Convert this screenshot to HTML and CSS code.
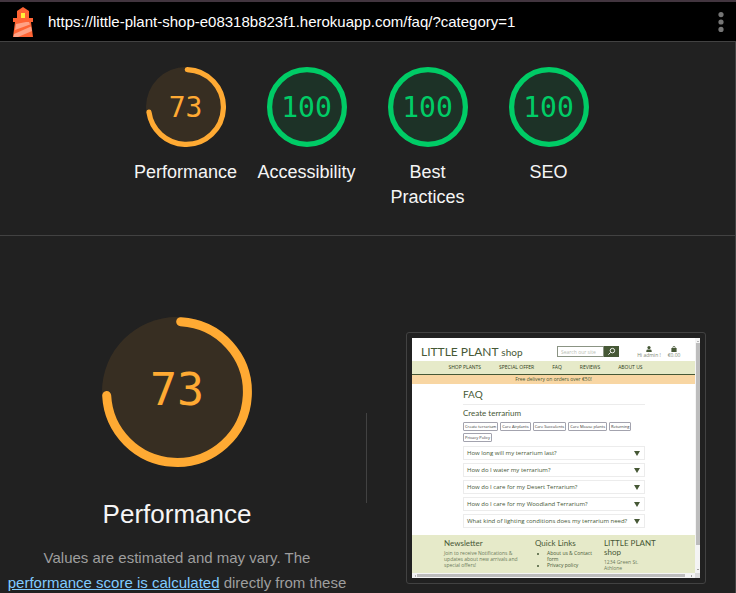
FILE: index.html
```html
<!DOCTYPE html>
<html lang="en">
<head>
<meta charset="utf-8">
<title>Lighthouse report</title>
<link rel="stylesheet" href="styles.css">
</head>
<body>
<header class="topbar">
  <svg class="logo" viewBox="0 0 20 30" aria-hidden="true">
    <path fill="#ff6434" d="M10 0 16 4V11H20V15H18L20 30H0L2 15H0V11H4V4Z"/>
    <path fill="#ffa285" d="M3 17 13 15H16L17 17.500 2 23ZM1 27 18 19.500 19 24 5 30H.5Z"/>
    <path fill="#fff03a" d="M8 6H12V11H8Z"/>
  </svg>
  <a class="url" href="#performance">https://little-plant-shop-e08318b823f1.herokuapp.com/faq/?category=1</a>
  <button class="menu" type="button" aria-label="Tools menu">
    <svg viewBox="0 0 6 20" aria-hidden="true"><circle cx="3" cy="2.6" r="2.6"/><circle cx="3" cy="10" r="2.6"/><circle cx="3" cy="17.4" r="2.6"/></svg>
  </button>
</header>
<main class="report">
  <nav class="scores">
    <a class="score average" href="#performance">
      <span class="gauge"><svg viewBox="0 0 80 80" aria-hidden="true"><circle class="disc" cx="40" cy="40" r="40"/><circle class="arc" cx="40" cy="40" r="37.4" pathLength="360" stroke-dasharray="260 360" transform="rotate(-88 40 40)"/></svg><span class="value">73</span></span>
      <span class="label">Performance</span>
    </a>
    <a class="score pass" href="#accessibility">
      <span class="gauge"><svg viewBox="0 0 80 80" aria-hidden="true"><circle class="disc" cx="40" cy="40" r="40"/><circle class="arc" cx="40" cy="40" r="37.4"/></svg><span class="value">100</span></span>
      <span class="label">Accessibility</span>
    </a>
    <a class="score pass" href="#practices">
      <span class="gauge"><svg viewBox="0 0 80 80" aria-hidden="true"><circle class="disc" cx="40" cy="40" r="40"/><circle class="arc" cx="40" cy="40" r="37.4"/></svg><span class="value">100</span></span>
      <span class="label">Best Practices</span>
    </a>
    <a class="score pass" href="#seo">
      <span class="gauge"><svg viewBox="0 0 80 80" aria-hidden="true"><circle class="disc" cx="40" cy="40" r="40"/><circle class="arc" cx="40" cy="40" r="37.4"/></svg><span class="value">100</span></span>
      <span class="label">SEO</span>
    </a>
  </nav>
  <section class="category" id="performance">
    <div class="summary average">
      <div class="gauge large"><svg viewBox="0 0 150 150" aria-hidden="true"><circle class="disc" cx="75" cy="75" r="75"/><circle class="arc" cx="75" cy="75" r="70.4" pathLength="360" stroke-dasharray="264 360" transform="rotate(-87 75 75)"/></svg><span class="value">73</span></div>
      <h1>Performance</h1>
      <p>Values are estimated and may vary. The <a href="#calc">performance score is calculated</a> directly from these</p>
    </div>
    <div class="divider"></div>
    <div class="frame">
      <div class="shop">
        <div class="page">
          <div class="brandbar">
            <div class="brand">LITTLE PLANT <small>shop</small></div>
            <div class="search">
              <input type="text" placeholder="Search our site" aria-label="Search our site">
              <button type="button" aria-label="Search"><svg viewBox="0 0 10 10" aria-hidden="true"><circle cx="6" cy="4" r="2.5"/><path d="M4 6 1.5 8.5"/></svg></button>
            </div>
            <div class="account"><svg viewBox="0 0 6 6" aria-hidden="true"><circle cx="3" cy="1.6" r="1.6"/><path d="M.3 6V5Q.3 3.6 2 3.6H4Q5.7 3.6 5.7 5V6Z"/></svg>Hi admin !</div>
            <div class="account"><svg viewBox="0 0 6 6" aria-hidden="true"><path d="M.4 2H1.4Q1.6 0 3 0T4.6 2H5.6V6H.4ZM2.1 2H3.9Q3.7.8 3 .8T2.1 2Z"/></svg>€0.00</div>
          </div>
          <div class="shopnav"><a href="#plants">SHOP PLANTS</a><a href="#offer">SPECIAL OFFER</a><a href="#faq">FAQ</a><a href="#reviews">REVIEWS</a><a href="#about">ABOUT US</a></div>
          <div class="banner">Free delivery on orders over €50!</div>
          <div class="faq">
            <h2>FAQ</h2>
            <h3>Create terrarium</h3>
            <div class="tags"><button type="button">Create terrarium</button><button type="button">Care Airplants</button><button type="button">Care Succulents</button><button type="button">Care Mouse plants</button><button type="button">Returning</button><button type="button">Privacy Policy</button></div>
            <div class="questions">
              <div class="question">How long will my terrarium last?<i></i></div>
              <div class="question">How do I water my terrarium?<i></i></div>
              <div class="question">How do I care for my Desert Terrarium?<i></i></div>
              <div class="question">How do I care for my Woodland Terrarium?<i></i></div>
              <div class="question">What kind of lighting conditions does my terrarium need?<i></i></div>
            </div>
          </div>
          <div class="footer">
            <div><h4>Newsletter</h4><p>Join to receive Notifications &amp;<br>updates about new arrivals and<br>special offers!</p></div>
            <div><h4>Quick Links</h4><ul><li>About us &amp; Contact<br>form</li><li>Privacy policy</li></ul></div>
            <div><h4>LITTLE PLANT<br>shop</h4><p>1234 Green St.<br>Athlone</p></div>
          </div>
        </div>
        <div class="vbar"><span class="up"></span><span class="thumb"></span><span class="down"></span></div>
        <div class="hbar"><span class="left"></span><span class="thumb"></span><span class="right"></span></div>
        <div class="corner"></div>
      </div>
    </div>
  </section>
</main>
</body>
</html>
```

FILE: styles.css
```css
* { box-sizing: border-box; }
html { background: #212121; }
body {
  margin: 0;
  height: 100vh;
  overflow: hidden;
  display: flex;
  flex-direction: column;
  font-family: "Liberation Sans", Arial, sans-serif;
  color: #f5f5f5;
}
a { color: inherit; text-decoration: none; }

.topbar {
  flex: none;
  display: flex;
  align-items: center;
  height: 42px;
  padding: 0 12px 0 13px;
  background: #000;
  border-top: 2px solid #42353f;
  border-bottom: 1px solid #424242;
}
.logo { width: 20px; height: 30px; }
.url { flex: 1; margin-left: 15px; font-size: 15px; line-height: 20px; color: #fff; }
.menu { padding: 0; border: 0; background: none; width: 6px; height: 20px; }
.menu svg { display: block; width: 6px; height: 20px; fill: #757575; }

.report { flex: 1; min-height: 0; overflow: hidden; border-right: 1px solid #424242; }
.scores {
  display: flex;
  justify-content: center;
  padding: 25px 1px 25px 0;
  border-bottom: 1px solid #424242;
}
.score {
  width: 121px;
  padding: 0 8px;
  display: flex;
  flex-direction: column;
  align-items: center;
  text-align: center;
}
.label { margin-top: 13px; font-size: 18px; line-height: 25px; min-height: 25px; }
.gauge {
  display: grid;
  place-items: center;
  width: 80px;
  height: 80px;
  font-family: "DejaVu Sans Mono", monospace;
  font-size: 28px;
}
.gauge > * { grid-area: 1 / 1; }
.gauge svg { width: 100%; height: 100%; }
.gauge.large { width: 150px; height: 150px; margin: 0 auto; font-size: 45px; }
.large .value { padding-bottom: 6px; }
.disc { opacity: 0.1; fill: currentColor; }
.arc { fill: none; stroke: currentColor; stroke-width: 5.2; stroke-linecap: round; }
.large .arc { stroke-width: 9; }
.average .gauge { color: #fa3; }
.pass .gauge { color: #0c6; }

.category { display: flex; align-items: center; padding: 81px 29px 0 4px; }
.summary { flex: 1; padding-bottom: 4px; text-align: center; }
h1 { margin: 31px 0 15px; font-size: 26px; font-weight: 400; line-height: 32px; }
.summary p { margin: 0; font-size: 15px; line-height: 25px; color: #9e9e9e; }
.summary p a { color: #80cbff; text-decoration: underline; }
.divider { width: 1px; height: 90px; margin: 0 39px 0 16px; background: #424242; }
.frame { width: 300px; padding: 5px; border: 1px solid #424242; border-radius: 3px; }

.shop {
  display: grid;
  grid-template-columns: 1fr 5px;
  grid-template-rows: 235px 5px;
  background: #fff;
  color: #465836;
  font-family: "Open Sans", sans-serif;
  font-size: 5px;
  line-height: 6px;
}
.page { min-width: 0; overflow: hidden; display: flex; flex-direction: column; }
.brandbar { flex: none; display: flex; align-items: center; height: 23px; padding: 4px 14px 0 9px; }
.brand { flex: 1; font-family: Lato, sans-serif; font-size: 12px; line-height: 16px; white-space: nowrap; }
.brand small { font-size: 10px; }
.search { display: flex; width: 62px; height: 11px; margin-right: 18px; }
.search input { min-width: 0; flex: 1; padding: 0 3px; border: 1px solid #8b9484; font: inherit; }
.search input::placeholder { color: #b9beb4; }
.search button { width: 15px; padding: 0; border: 0; background: #465836; }
.search svg { display: block; width: 9px; height: 9px; margin: 0 auto; fill: none; stroke: #fff; }
.account { display: flex; flex-direction: column; align-items: center; width: 24px; white-space: nowrap; color: #7d8775; }
.account + .account { width: 14px; margin-left: 6px; }
.account svg { width: 6px; height: 6px; fill: #465836; }
.shopnav { flex: none; display: flex; justify-content: center; gap: 18px; height: 14px; padding-right: 16px; line-height: 12px; color: #2c3a20; background: #e6eac9; border-bottom: 1px solid #465836; }
.banner { flex: none; height: 9px; line-height: 9px; text-align: center; background: #f8d6a3; }
.faq { flex: 1; padding: 4px 50px 0 51px; }
h2, h3, h4 { margin: 0; font-family: Lato, sans-serif; font-weight: 400; }
h2 { font-size: 10px; line-height: 12px; padding-bottom: 4px; border-bottom: 1px solid #ececec; }
h3 { margin-top: 3px; font-size: 8px; line-height: 10px; }
.tags { display: flex; flex-wrap: wrap; gap: 2px; margin: 4px 0; }
.tags button { height: 9px; padding: 0 1px; border: 1px solid #a3a3ae; border-radius: 1px; background: #fff; color: #333; font-family: "Open Sans", sans-serif; font-size: 4px; line-height: 6px; }
.questions { display: grid; gap: 3px; font-size: 6px; }
.question { display: flex; align-items: center; justify-content: space-between; height: 14px; padding: 0 4px 0 3px; border: 1px solid #ececec; white-space: nowrap; }
.question i { border: solid transparent; border-width: 5px 3px 0; border-top-color: #465836; }
.footer { flex: none; display: grid; grid-template-columns: 91px 69px 1fr; height: 38px; padding: 4px 0 0 32px; background: #e6eac9; }
.footer h4 { font-size: 8px; line-height: 9px; }
.footer p, .footer ul { margin: 2px 0 0; color: #6b7a5b; line-height: 6px; }
.footer ul { padding-left: 12px; color: #465836; }
.vbar, .hbar { display: flex; background: #f4f4f4; }
.vbar { flex-direction: column; align-items: center; padding: 2px 0; }
.vbar .thumb { flex: 1; width: 4px; margin: 1px 0 24px; background: #bdbdbd; }
.hbar { align-items: center; padding: 0 2px; }
.hbar .thumb { flex: 1; height: 3px; margin: 0 6px 0 1px; background: #bdbdbd; }
.up, .down, .left, .right { width: 2px; height: 2px; border: 1px solid transparent; }
.up { border-bottom-color: #777; }
.down { border-top-color: #555; }
.left { border-right-color: #777; }
.right { border-left-color: #555; }
.corner { background: #dcdcdc; }
```
